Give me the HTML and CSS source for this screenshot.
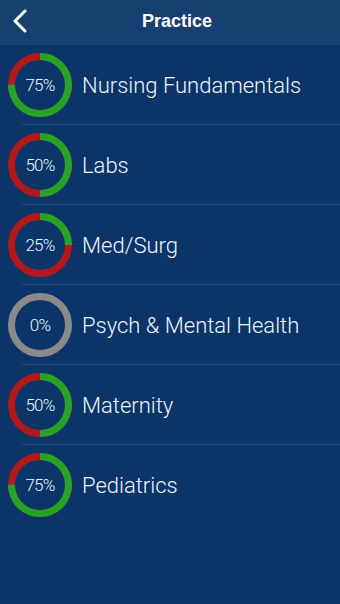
FILE: index.html
```html
<!DOCTYPE html>
<html lang="en">
<head>
    <meta charset="UTF-8">
    <meta name="viewport" content="width=device-width, initial-scale=1.0">
    <title>Practice</title>
    <link rel="stylesheet" href="styles.css">
</head>
<body>

<!-- Barra superior -->
<div class="topbar">
    <svg class="back" width="16" height="24" viewBox="0 0 16 24"><path d="M13 2 L3 12 L13 22" fill="none" stroke="#fff" stroke-width="3" stroke-linecap="round" stroke-linejoin="round"/></svg>
    <h1>Practice</h1>
</div>

<!-- Lista de categorías -->
<ul class="list">
    <li class="item"><div class="ring" data-pct="75"></div><span class="name">Nursing Fundamentals</span></li>
    <li class="item"><div class="ring" data-pct="50"></div><span class="name">Labs</span></li>
    <li class="item"><div class="ring" data-pct="25"></div><span class="name">Med/Surg</span></li>
    <li class="item"><div class="ring" data-pct="0"></div><span class="name">Psych &amp; Mental Health</span></li>
    <li class="item"><div class="ring" data-pct="50"></div><span class="name">Maternity</span></li>
    <li class="item last"><div class="ring" data-pct="75"></div><span class="name">Pediatrics</span></li>
</ul>

<script>
// Dibuja los anillos de progreso
var rings = document.querySelectorAll('.ring');
var R = 28.5;
var C = 2 * Math.PI * R;
rings.forEach(function (el) {
    var pct = parseInt(el.getAttribute('data-pct'), 10);
    var svg = '<svg width="64" height="64" viewBox="0 0 64 64">';
    if (pct === 0) {
        svg += '<circle cx="32" cy="32" r="' + R + '" fill="none" stroke="#8a8a8a" stroke-width="7"/>';
    } else {
        svg += '<circle cx="32" cy="32" r="' + R + '" fill="none" stroke="#b3181d" stroke-width="7"/>';
        var g = C * pct / 100;
        svg += '<circle cx="32" cy="32" r="' + R + '" fill="none" stroke="#23a424" stroke-width="7" stroke-dasharray="' + g + ' ' + C + '" transform="rotate(-90 32 32)"/>';
    }
    svg += '</svg><span class="pct">' + pct + '%</span>';
    el.innerHTML = svg;
});
</script>

</body>
</html>
```

FILE: styles.css
```css
/* Estilos generales */
body { margin: 0; background-color: #0b3569; font-family: Roboto, "Liberation Sans", sans-serif; color: #eef4fb; }

.topbar { position: relative; height: 45px; background-color: #173f6f; display: flex; align-items: center; justify-content: center; }
.topbar h1 { margin: 0 0 2px; font-family: "Liberation Sans", Arial, sans-serif; font-size: 18px; font-weight: bold; color: #fff; padding-left: 14px; }
.back { position: absolute; left: 12px; top: 9px; }

.list { list-style: none; margin: 0; padding: 0; }
.item { position: relative; height: 80px; display: flex; align-items: center; padding-left: 8px; }
.item::after { content: ""; position: absolute; left: 22px; right: 0; bottom: 0; height: 1px; background-color: #244a7b; }
.item.last::after { display: none; }

.ring { position: relative; width: 64px; height: 64px; flex-shrink: 0; }
.ring svg { display: block; }
.pct { position: absolute; top: 0; left: 0; width: 64px; line-height: 64px; text-align: center; font-size: 17px; font-weight: 300; color: #eef4fb; letter-spacing: -0.8px; }

.name { margin-left: 10px; font-size: 22px; font-weight: 300; }
```
